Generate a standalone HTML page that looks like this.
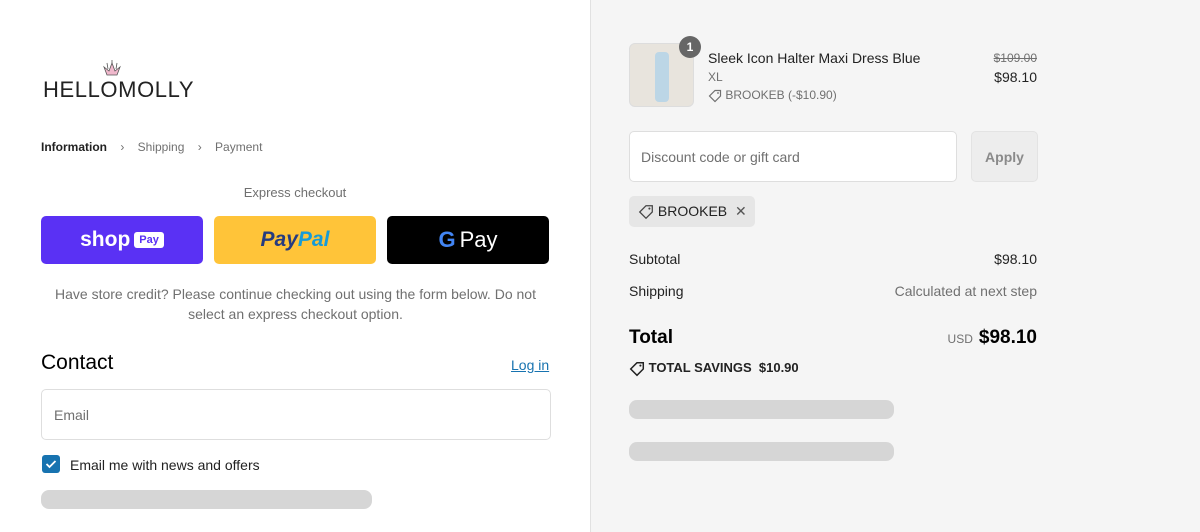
<!DOCTYPE html>
<html><head><meta charset="utf-8"><style>
*{box-sizing:border-box;margin:0;padding:0}
body{width:1200px;height:532px;overflow:hidden;font-family:"Liberation Sans",sans-serif;color:#000;background:#fff;position:relative}
.abs{position:absolute}
.right{position:absolute;left:590px;top:0;width:610px;height:532px;background:#f5f5f5;border-left:1px solid #e1e1e1}
.btn{position:absolute;top:216px;width:162px;height:48px;border-radius:5px;display:flex;align-items:center;justify-content:center}
.sk{position:absolute;background:#d6d6d6;border-radius:8px}
.tag{display:inline-block;vertical-align:middle}
</style></head><body>
<div class="abs" style="left:43px;top:77px;font-size:22px;letter-spacing:0.6px;color:#222">HELLOMOLLY</div>
<svg class="abs" style="left:101px;top:59px" width="22" height="19" viewBox="0 0 22 19"><path d="M3 8 L6 16 L16 16 L19 8 L14 12 L11 4 L8 12 Z" fill="#f0b8cc" stroke="#555" stroke-width="0.8"/><path d="M11 1v4M6 4l1 6M16 4l-1 6" stroke="#555" stroke-width="0.8"/></svg>
<div class="abs" style="left:41px;top:140px;font-size:12px;color:#707070"><b style="color:#222;font-weight:600">Information</b>&nbsp;&nbsp;&nbsp;&nbsp;›&nbsp;&nbsp;&nbsp;&nbsp;Shipping&nbsp;&nbsp;&nbsp;&nbsp;›&nbsp;&nbsp;&nbsp;&nbsp;Payment</div>
<div class="abs" style="left:0;width:590px;top:185px;text-align:center;font-size:13px;color:#707070">Express checkout</div>
<div class="btn" style="left:41px;background:#5a31f4;color:#fff"><span style="font-size:21px;font-weight:bold">shop</span><span style="background:#fff;color:#5a31f4;font-size:11px;font-weight:bold;padding:2px 5px;border-radius:3px;margin-left:4px">Pay</span></div>
<div class="btn" style="left:214px;background:#ffc439"><span style="font-size:21px;font-weight:bold;font-style:italic;color:#253b80">Pay</span><span style="font-size:21px;font-weight:bold;font-style:italic;color:#179bd7">Pal</span></div>
<div class="btn" style="left:387px;background:#000;color:#fff"><span style="font-size:22px;font-weight:bold;color:#4285f4">G</span><span style="font-size:22px;margin-left:4px">Pay</span></div>
<div class="abs" style="left:41px;width:509px;top:284px;text-align:center;font-size:14px;color:#707070;line-height:20px">Have store credit? Please continue checking out using the form below. Do not select an express checkout option.</div>
<div class="abs" style="left:41px;top:351px;font-size:21px;color:#000">Contact</div>
<div class="abs" style="left:511px;top:357px;font-size:14px;color:#1773b0;text-decoration:underline">Log in</div>
<div class="abs" style="left:41px;top:389px;width:510px;height:51px;border:1px solid #dedede;border-radius:5px;padding:17px 12px;font-size:14px;color:#707070">Email</div>
<div class="abs" style="left:42px;top:455px;width:18px;height:18px;background:#1773b0;border-radius:3px"><svg width="18" height="18"><path d="M4.5 9l3 3 6-6" stroke="#fff" stroke-width="1.8" fill="none"/></svg></div>
<div class="abs" style="left:70px;top:457px;font-size:14px;color:#222">Email me with news and offers</div>
<div class="sk" style="left:41px;top:490px;width:331px;height:19px"></div>

<div class="right">
<div class="abs" style="left:38px;top:43px;width:65px;height:64px;border:1px solid #ddd;border-radius:6px;background:#e8e4dd;overflow:hidden"><div style="margin:8px auto;width:14px;height:50px;background:#bcd6e6;border-radius:4px"></div></div>
<div class="abs" style="left:88px;top:36px;width:22px;height:22px;border-radius:11px;background:#666;color:#fff;font-size:12px;font-weight:bold;text-align:center;line-height:22px">1</div>
<div class="abs" style="left:117px;top:50px;font-size:14px;color:#222">Sleek Icon Halter Maxi Dress Blue</div>
<div class="abs" style="left:117px;top:70px;font-size:12px;color:#707070">XL</div>
<div class="abs" style="left:117px;top:88px;font-size:12px;color:#707070"><svg class="tag" width="14" height="14" viewBox="0 0 14 14"><path d="M7 1.5h5.5V7L7 12.5 1.5 7z" fill="none" stroke="#707070" stroke-width="1.2"/><circle cx="10" cy="4" r="0.9" fill="#707070"/></svg> BROOKEB (-$10.90)</div>
<div class="abs" style="right:163px;top:51px;font-size:12px;color:#707070;text-decoration:line-through">$109.00</div>
<div class="abs" style="right:163px;top:69px;font-size:14px;color:#222">$98.10</div>
<div class="abs" style="left:38px;top:131px;width:328px;height:51px;background:#fff;border:1px solid #dedede;border-radius:5px;padding:17px 11px;font-size:14px;color:#707070">Discount code or gift card</div>
<div class="abs" style="left:380px;top:131px;width:67px;height:51px;background:#ededed;border:1px solid #e3e3e3;border-radius:5px;text-align:center;line-height:50px;font-size:14px;font-weight:bold;color:#8a8a8a">Apply</div>
<div class="abs" style="left:38px;top:196px;width:126px;height:31px;background:#e6e6e6;border-radius:5px;padding:7px 9px;font-size:14px;color:#222;white-space:nowrap"><svg class="tag" width="16" height="16" viewBox="0 0 14 14"><path d="M7 1.5h5.5V7L7 12.5 1.5 7z" fill="none" stroke="#444" stroke-width="1.1"/><circle cx="10" cy="4" r="0.9" fill="#444"/></svg> BROOKEB <span style="color:#555;margin-left:4px">✕</span></div>
<div class="abs" style="left:38px;top:251px;font-size:14px;color:#222">Subtotal</div>
<div class="abs" style="right:163px;top:251px;font-size:14px;color:#222">$98.10</div>
<div class="abs" style="left:38px;top:283px;font-size:14px;color:#222">Shipping</div>
<div class="abs" style="right:163px;top:283px;font-size:14px;color:#707070">Calculated at next step</div>
<div class="abs" style="left:38px;top:327px;font-size:19px;font-weight:600;color:#000">Total</div>
<div class="abs" style="right:163px;top:327px;font-size:19px;font-weight:bold;color:#000"><span style="font-size:12px;font-weight:normal;color:#707070;margin-right:6px">USD</span>$98.10</div>
<div class="abs" style="left:38px;top:360px;font-size:13px;font-weight:bold;color:#222"><svg class="tag" width="16" height="16" viewBox="0 0 14 14"><path d="M7 1.5h5.5V7L7 12.5 1.5 7z" fill="none" stroke="#222" stroke-width="1.3"/><circle cx="10" cy="4" r="0.9" fill="#222"/></svg> TOTAL SAVINGS &nbsp;$10.90</div>
<div class="sk" style="left:38px;top:400px;width:265px;height:19px"></div>
<div class="sk" style="left:38px;top:442px;width:265px;height:19px"></div>
</div>
</body></html>
